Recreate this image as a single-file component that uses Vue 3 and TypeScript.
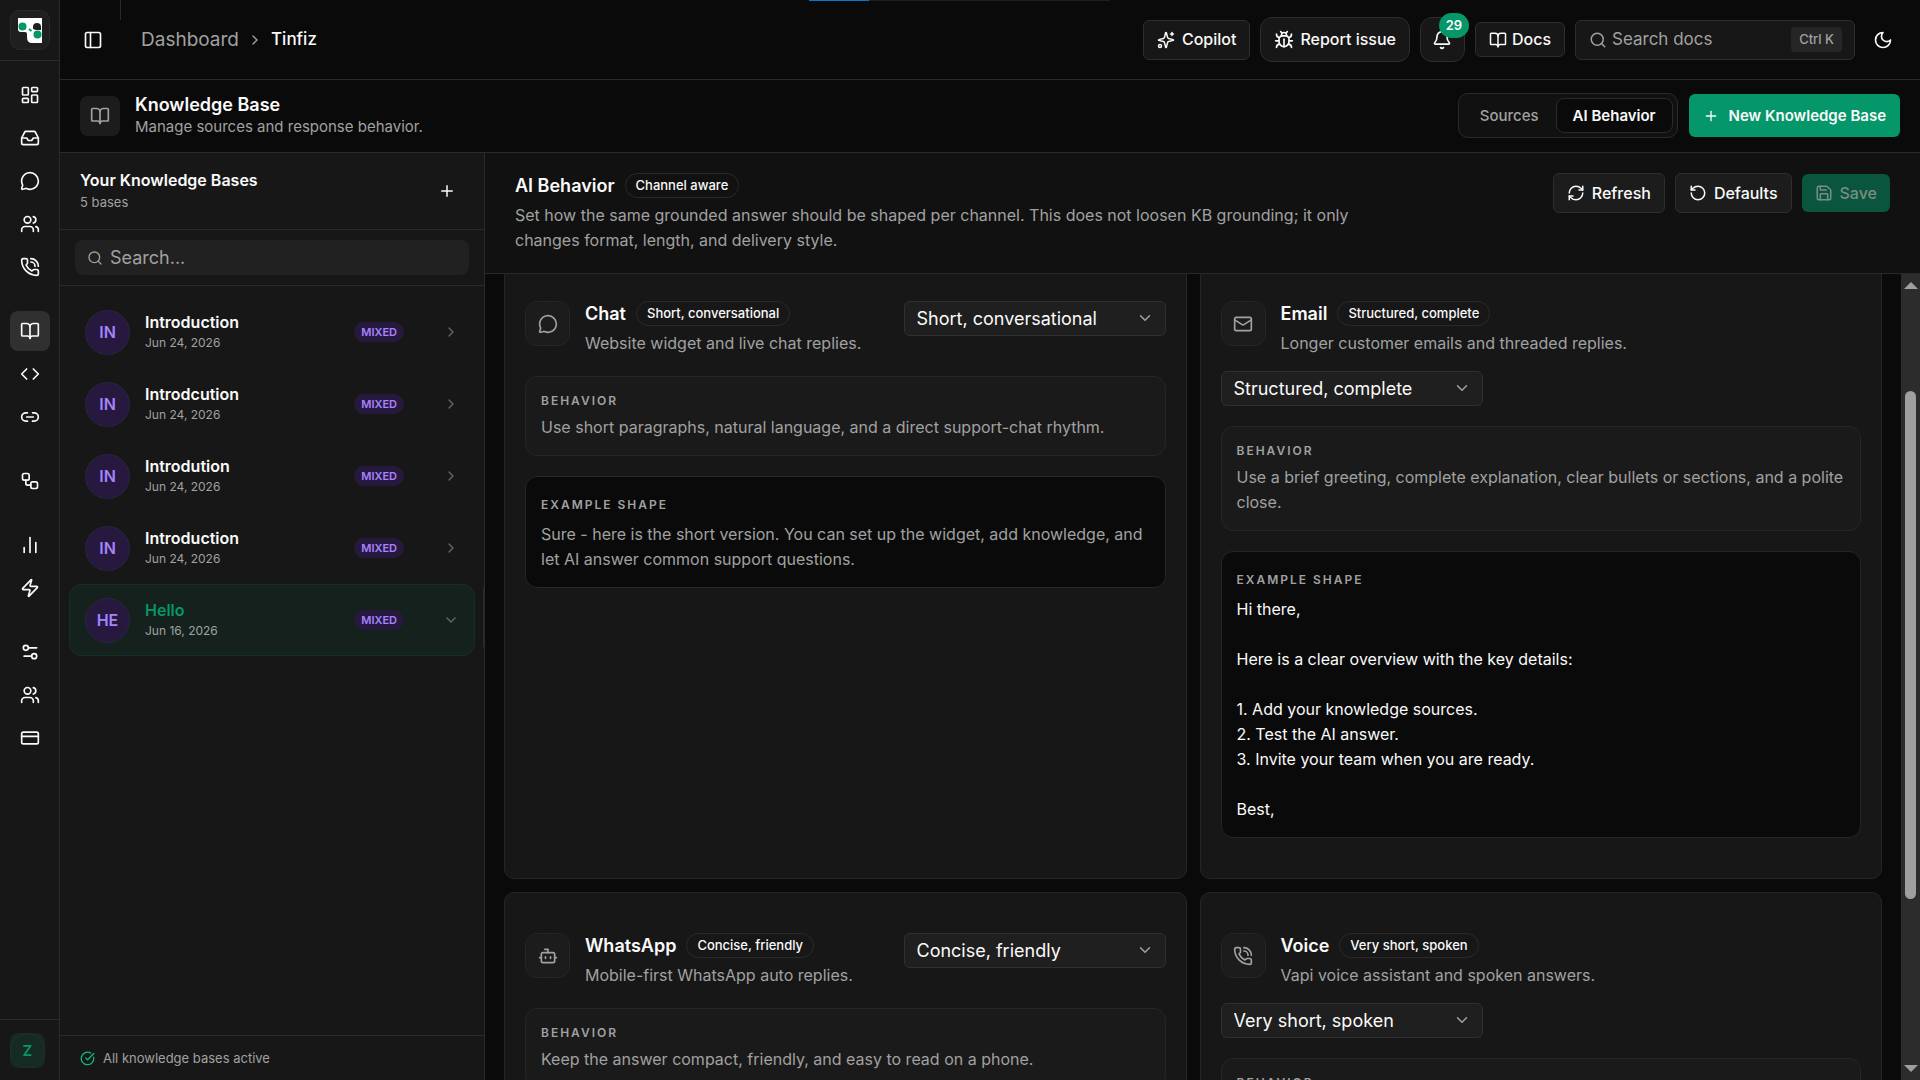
<script setup lang="ts">
import { ref } from 'vue'

type IconName = keyof typeof icons

const icons = {
  panel: '<rect width="18" height="18" x="3" y="3" rx="2"/><path d="M9 3v18"/>',
  dashboard: '<rect width="7" height="9" x="3" y="3" rx="1"/><rect width="7" height="5" x="14" y="3" rx="1"/><rect width="7" height="9" x="14" y="12" rx="1"/><rect width="7" height="5" x="3" y="16" rx="1"/>',
  inbox: '<path d="M22 12h-6l-2 3h-4l-2-3H2"/><path d="M5.45 5.11 2 12v6a2 2 0 0 0 2 2h16a2 2 0 0 0 2-2v-6l-3.45-6.89A2 2 0 0 0 16.76 4H7.24a2 2 0 0 0-1.79 1.11z"/>',
  chat: '<path d="M2.992 16.342a2 2 0 0 1 .094 1.167l-1.065 3.29a1 1 0 0 0 1.236 1.168l3.413-.998a2 2 0 0 1 1.099.092 10 10 0 1 0-4.777-4.719"/>',
  users: '<path d="M16 21v-2a4 4 0 0 0-4-4H6a4 4 0 0 0-4 4v2"/><circle cx="9" cy="7" r="4"/><path d="M22 21v-2a4 4 0 0 0-3-3.87"/><path d="M16 3.13a4 4 0 0 1 0 7.75"/>',
  phone: '<path d="M13 2a9 9 0 0 1 9 9"/><path d="M13 6a5 5 0 0 1 5 5"/><path d="M13.832 16.568a1 1 0 0 0 1.213-.303l.355-.465A2 2 0 0 1 17 15h3a2 2 0 0 1 2 2v3a2 2 0 0 1-2 2A18 18 0 0 1 2 4a2 2 0 0 1 2-2h3a2 2 0 0 1 2 2v3a2 2 0 0 1-.8 1.6l-.468.351a1 1 0 0 0-.292 1.233 14 14 0 0 0 6.392 6.384"/>',
  book: '<path d="M12 7v14"/><path d="M3 18a1 1 0 0 1-1-1V4a1 1 0 0 1 1-1h5a4 4 0 0 1 4 4 4 4 0 0 1 4-4h5a1 1 0 0 1 1 1v13a1 1 0 0 1-1 1h-6a3 3 0 0 0-3 3 3 3 0 0 0-3-3z"/>',
  code: '<path d="m16 18 6-6-6-6"/><path d="m8 6-6 6 6 6"/>',
  link: '<path d="M9 17H7A5 5 0 0 1 7 7h2"/><path d="M15 7h2a5 5 0 1 1 0 10h-2"/><path d="M8 12h8"/>',
  workflow: '<rect width="8" height="8" x="3" y="3" rx="2"/><path d="M7 11v4a2 2 0 0 0 2 2h4"/><rect width="8" height="8" x="13" y="13" rx="2"/>',
  chart: '<path d="M12 21V3"/><path d="M5 21v-6"/><path d="M19 21V9"/>',
  zap: '<path d="M4 14a1 1 0 0 1-.78-1.63l9.9-10.2a.5.5 0 0 1 .86.46l-1.92 6.02A1 1 0 0 0 13 10h7a1 1 0 0 1 .78 1.63l-9.9 10.2a.5.5 0 0 1-.86-.46l1.92-6.02A1 1 0 0 0 11 14z"/>',
  settings: '<path d="M20 7h-9"/><path d="M14 17H5"/><circle cx="17" cy="17" r="3"/><circle cx="7" cy="7" r="3"/>',
  card: '<rect width="20" height="14" x="2" y="5" rx="2"/><path d="M2 10h20"/>',
  chevronRight: '<path d="m9 18 6-6-6-6"/>',
  chevronDown: '<path d="m6 9 6 6 6-6"/>',
  sparkles: '<path d="M9.937 15.5A2 2 0 0 0 8.5 14.063l-6.135-1.582a.5.5 0 0 1 0-.962L8.5 9.936A2 2 0 0 0 9.937 8.5l1.582-6.135a.5.5 0 0 1 .963 0L14.063 8.5A2 2 0 0 0 15.5 9.937l6.135 1.581a.5.5 0 0 1 0 .964L15.5 14.063a2 2 0 0 0-1.437 1.437l-1.582 6.135a.5.5 0 0 1-.963 0z"/><path d="M20 2v4"/><path d="M22 4h-4"/><circle cx="4" cy="20" r="2"/>',
  bug: '<path d="m8 2 1.88 1.88"/><path d="M14.12 3.88 16 2"/><path d="M9 7.13v-1a3.003 3.003 0 1 1 6 0v1"/><path d="M12 20c-3.3 0-6-2.7-6-6v-3a4 4 0 0 1 4-4h4a4 4 0 0 1 4 4v3c0 3.3-2.7 6-6 6"/><path d="M12 20v-9"/><path d="M6.53 9C4.6 8.8 3 7.1 3 5"/><path d="M6 13H2"/><path d="M3 21c0-2.1 1.7-3.9 3.8-4"/><path d="M20.97 5c0 2.1-1.6 3.8-3.5 4"/><path d="M22 13h-4"/><path d="M17.2 17c2.1.1 3.8 1.9 3.8 4"/>',
  bell: '<path d="M10.268 21a2 2 0 0 0 3.464 0"/><path d="M3.262 15.326A1 1 0 0 0 4 17h16a1 1 0 0 0 .74-1.673C19.41 13.956 18 12.499 18 8A6 6 0 0 0 6 8c0 4.499-1.411 5.956-2.738 7.326"/>',
  search: '<path d="m21 21-4.34-4.34"/><circle cx="11" cy="11" r="8"/>',
  moon: '<path d="M12 3a6 6 0 0 0 9 9 9 9 0 1 1-9-9Z"/>',
  plus: '<path d="M5 12h14"/><path d="M12 5v14"/>',
  refresh: '<path d="M3 12a9 9 0 0 1 9-9 9.75 9.75 0 0 1 6.74 2.74L21 8"/><path d="M21 3v5h-5"/><path d="M21 12a9 9 0 0 1-9 9 9.75 9.75 0 0 1-6.74-2.74L3 16"/><path d="M8 16H3v5"/>',
  undo: '<path d="M3 12a9 9 0 1 0 9-9 9.75 9.75 0 0 0-6.74 2.74L3 8"/><path d="M3 3v5h5"/>',
  save: '<path d="M15.2 3a2 2 0 0 1 1.4.6l3.8 3.8a2 2 0 0 1 .6 1.4V19a2 2 0 0 1-2 2H5a2 2 0 0 1-2-2V5a2 2 0 0 1 2-2z"/><path d="M17 21v-7a1 1 0 0 0-1-1H8a1 1 0 0 0-1 1v7"/><path d="M7 3v4a1 1 0 0 0 1 1h7"/>',
  mail: '<rect width="20" height="16" x="2" y="4" rx="2"/><path d="m22 7-8.97 5.7a1.94 1.94 0 0 1-2.06 0L2 7"/>',
  bot: '<path d="M12 8V4H8"/><rect width="16" height="12" x="4" y="8" rx="2"/><path d="M2 14h2"/><path d="M20 14h2"/><path d="M15 13v2"/><path d="M9 13v2"/>',
  check: '<path d="M21.801 10A10 10 0 1 1 17 3.335"/><path d="m9 11 3 3L22 4"/>',
}

const navGroups: { icon: IconName; label: string; active?: boolean }[][] = [
  [
    { icon: 'dashboard', label: 'Overview' },
    { icon: 'inbox', label: 'Inbox' },
    { icon: 'chat', label: 'Conversations' },
    { icon: 'users', label: 'Contacts' },
    { icon: 'phone', label: 'Calls' },
  ],
  [
    { icon: 'book', label: 'Knowledge Base', active: true },
    { icon: 'code', label: 'Embed' },
    { icon: 'link', label: 'Integrations' },
  ],
  [{ icon: 'workflow', label: 'Workflows' }],
  [
    { icon: 'chart', label: 'Analytics' },
    { icon: 'zap', label: 'Automation' },
  ],
  [
    { icon: 'settings', label: 'Settings' },
    { icon: 'users', label: 'Team' },
    { icon: 'card', label: 'Billing' },
  ],
]

const bases = [
  { initials: 'IN', name: 'Introduction', date: 'Jun 24, 2026' },
  { initials: 'IN', name: 'Introdcution', date: 'Jun 24, 2026' },
  { initials: 'IN', name: 'Introdution', date: 'Jun 24, 2026' },
  { initials: 'IN', name: 'Introduction', date: 'Jun 24, 2026' },
  { initials: 'HE', name: 'Hello', date: 'Jun 16, 2026' },
]
const selected = ref(4)

const styles = ['Short, conversational', 'Structured, complete', 'Concise, friendly', 'Very short, spoken']

interface Channel {
  id: string
  icon: IconName
  name: string
  style: string
  summary: string
  stacked?: boolean
  behavior: string
  example: string
  strong?: boolean
}

const channels = ref<Channel[]>([
  {
    id: 'chat',
    icon: 'chat',
    name: 'Chat',
    style: styles[0],
    summary: 'Website widget and live chat replies.',
    behavior: 'Use short paragraphs, natural language, and a direct support-chat rhythm.',
    example: 'Sure - here is the short version. You can set up the widget, add knowledge, and let AI answer common support questions.',
  },
  {
    id: 'email',
    icon: 'mail',
    name: 'Email',
    style: styles[1],
    summary: 'Longer customer emails and threaded replies.',
    stacked: true,
    behavior: 'Use a brief greeting, complete explanation, clear bullets or sections, and a polite close.',
    example: 'Hi there,\n\nHere is a clear overview with the key details:\n\n1. Add your knowledge sources.\n2. Test the AI answer.\n3. Invite your team when you are ready.\n\nBest,',
    strong: true,
  },
  {
    id: 'whatsapp',
    icon: 'bot',
    name: 'WhatsApp',
    style: styles[2],
    summary: 'Mobile-first WhatsApp auto replies.',
    behavior: 'Keep the answer compact, friendly, and easy to read on a phone.',
    example: '',
  },
  {
    id: 'voice',
    icon: 'phone',
    name: 'Voice',
    style: styles[3],
    summary: 'Vapi voice assistant and spoken answers.',
    stacked: true,
    behavior: '',
    example: '',
  },
])
</script>

<template>
  <div class="app">
    <nav class="rail" aria-label="Main">
      <div class="rail-top">
        <a href="#" class="logo" aria-label="Home">
          <svg width="24" height="25" viewBox="0 0 24 25">
            <path d="M0 0h24v25H14q-5 0-5-6v-3q0-2-2-2H3q-3 0-3-3z" fill="#fff" />
            <path d="M15 11V9q0-4 4-4t4 4v3h-5z" fill="#1f1f1f" />
            <circle cx="4.500" cy="8.500" r="4" fill="#059669" />
            <circle cx="19.500" cy="16.500" r="4" fill="#059669" />
            <path d="m11 11 2.500 2" stroke="#059669" stroke-width="2" />
          </svg>
        </a>
      </div>
      <div class="rail-groups">
        <div v-for="(group, g) in navGroups" :key="g" class="rail-group">
          <a v-for="item in group" :key="item.label" href="#" class="rail-link" :class="{ active: item.active }" :aria-label="item.label">
            <svg class="icon i20" viewBox="0 0 24 24" v-html="icons[item.icon]" />
          </a>
        </div>
      </div>
      <div class="rail-bottom"><button class="avatar-z" type="button"><span>Z</span></button></div>
    </nav>

    <div class="page">
      <header class="topbar">
        <div class="progress"></div>
        <button class="plain toggle" type="button" aria-label="Toggle sidebar">
          <svg class="icon i20" viewBox="0 0 24 24" v-html="icons.panel" />
        </button>
        <nav class="crumbs" aria-label="Breadcrumb">
          <a href="#">Dashboard</a>
          <svg class="icon i16" viewBox="0 0 24 24" v-html="icons.chevronRight" />
          <span class="here">Tinfiz</span>
        </nav>
        <div class="tools">
          <button class="btn copilot" type="button"><svg class="icon i18" viewBox="0 0 24 24" v-html="icons.sparkles" />Copilot</button>
          <button class="btn report" type="button"><svg class="icon i20" viewBox="0 0 24 24" v-html="icons.bug" />Report issue</button>
          <button class="btn bell" type="button" aria-label="Notifications">
            <svg class="icon i20" viewBox="0 0 24 24" v-html="icons.bell" /><span class="count">29</span>
          </button>
          <a href="#" class="btn docs"><svg class="icon i18" viewBox="0 0 24 24" v-html="icons.book" />Docs</a>
          <label class="doc-search">
            <svg class="icon i18" viewBox="0 0 24 24" v-html="icons.search" />
            <input type="search" placeholder="Search docs" aria-label="Search docs" />
            <kbd>Ctrl K</kbd>
          </label>
          <button class="plain theme" type="button" aria-label="Toggle theme"><svg class="icon i20" viewBox="0 0 24 24" v-html="icons.moon" /></button>
        </div>
      </header>

      <section class="page-head">
        <div class="page-icon"><svg class="icon i20" viewBox="0 0 24 24" v-html="icons.book" /></div>
        <div class="page-title">
          <h1>Knowledge Base</h1>
          <p>Manage sources and response behavior.</p>
        </div>
        <div class="tabs" role="tablist">
          <button class="tab" type="button" role="tab" aria-selected="false">Sources</button>
          <button class="tab on" type="button" role="tab" aria-selected="true">AI Behavior</button>
        </div>
        <button class="btn primary create" type="button"><svg class="icon i16" viewBox="0 0 24 24" v-html="icons.plus" />New Knowledge Base</button>
      </section>

      <div class="body">
        <aside class="bases">
          <div class="bases-head">
            <div>
              <h2>Your Knowledge Bases</h2>
              <p>5 bases</p>
            </div>
            <button class="plain add" type="button" aria-label="Add knowledge base"><svg class="icon i18" viewBox="0 0 24 24" v-html="icons.plus" /></button>
          </div>
          <div class="bases-search">
            <label>
              <svg class="icon i16" viewBox="0 0 24 24" v-html="icons.search" />
              <input type="search" placeholder="Search..." aria-label="Search knowledge bases" />
            </label>
          </div>
          <div class="base-list">
            <button v-for="(base, i) in bases" :key="i" type="button" class="base" :class="{ selected: i === selected }" @click="selected = i">
              <span class="initials">{{ base.initials }}</span>
              <span class="base-text">
                <span class="base-name">{{ base.name }}</span>
                <span class="base-date">{{ base.date }}</span>
              </span>
              <span class="kind">MIXED</span>
              <svg class="icon i16" viewBox="0 0 24 24" v-html="i === selected ? icons.chevronDown : icons.chevronRight" />
            </button>
          </div>
          <footer class="bases-foot"><svg class="icon i14" viewBox="0 0 24 24" v-html="icons.check" />All knowledge bases active</footer>
          <span class="grip" aria-hidden="true"></span>
        </aside>

        <main class="main">
          <header class="main-head">
            <div class="main-intro">
              <div class="title-row">
                <h2>AI Behavior</h2>
                <span class="pill">Channel aware</span>
              </div>
              <p>Set how the same grounded answer should be shaped per channel. This does not loosen KB grounding; it only changes format, length, and delivery style.</p>
            </div>
            <div class="actions">
              <button class="btn action" type="button"><svg class="icon i18" viewBox="0 0 24 24" v-html="icons.refresh" />Refresh</button>
              <button class="btn action" type="button"><svg class="icon i18" viewBox="0 0 24 24" v-html="icons.undo" />Defaults</button>
              <button class="btn primary save" type="button" disabled><svg class="icon i18" viewBox="0 0 24 24" v-html="icons.save" />Save</button>
            </div>
          </header>

          <div class="scroller">
            <div class="viewport">
              <div class="cards">
                <article v-for="channel in channels" :key="channel.id" class="card">
                  <div class="card-head" :class="{ stacked: channel.stacked }">
                    <div class="channel">
                      <div class="channel-icon"><svg class="icon i20" viewBox="0 0 24 24" v-html="icons[channel.icon]" /></div>
                      <div class="channel-text">
                        <div class="title-row">
                          <h3>{{ channel.name }}</h3>
                          <span class="pill">{{ channel.style }}</span>
                        </div>
                        <p>{{ channel.summary }}</p>
                      </div>
                    </div>
                    <div class="select">
                      <select v-model="channel.style" :aria-label="channel.name + ' style'">
                        <option v-for="style in styles" :key="style">{{ style }}</option>
                      </select>
                      <svg class="icon i18" viewBox="0 0 24 24" v-html="icons.chevronDown" />
                    </div>
                  </div>
                  <section class="box">
                    <h4>BEHAVIOR</h4>
                    <p>{{ channel.behavior }}</p>
                  </section>
                  <section v-if="channel.example" class="box example" :class="{ strong: channel.strong }">
                    <h4>EXAMPLE SHAPE</h4>
                    <p>{{ channel.example }}</p>
                  </section>
                </article>
              </div>
            </div>
            <div class="scrollbar" aria-hidden="true">
              <span class="arrow up"></span>
              <span class="track"><span class="thumb"></span></span>
              <span class="arrow down"></span>
            </div>
          </div>
        </main>
      </div>
    </div>
  </div>
</template>

<style>
body {
  margin: 0;
  background: #0a0a0a;
}
</style>

<style scoped>
.app {
  display: flex;
  height: 100vh;
  overflow: hidden;
  color: #fafafa;
  background: #0a0a0a;
  font-family: Inter, sans-serif;
  font-size: 16px;
  line-height: 25px;
}
.app * {
  box-sizing: border-box;
}
h1, h2, h3, h4, p {
  margin: 0;
}
p {
  color: #a1a1a1;
}
button, input, select {
  margin: 0;
  color: inherit;
  font: inherit;
}
input {
  flex: 1;
  min-width: 0;
  padding: 0;
  border: 0;
  outline: 0;
  background: none;
  font-size: 18px;
}
input::placeholder {
  color: #a1a1a1;
  opacity: 1;
}
a {
  color: inherit;
  text-decoration: none;
}
.icon {
  flex: none;
  fill: none;
  stroke: currentColor;
  stroke-width: 2;
  stroke-linecap: round;
  stroke-linejoin: round;
}
.i14 { width: 15px; height: 15px; }
.i16 { width: 16px; height: 16px; }
.i18 { width: 18px; height: 18px; }
.i20 { width: 20px; height: 20px; }

.rail {
  display: flex;
  flex: none;
  flex-direction: column;
  width: 60px;
  border-right: 1px solid #2a2a2a;
  background: #171717;
}
.rail-top {
  padding: 10px 9px 10px 10px;
  border-bottom: 1px solid #2a2a2a;
}
.logo {
  display: flex;
  align-items: center;
  justify-content: center;
  width: 40px;
  height: 40px;
  border: 1px solid #2a2a2a;
  border-radius: 10px;
  background: #1f1f1f;
}
.rail-groups {
  display: flex;
  flex: 1;
  flex-direction: column;
  gap: 24px;
  padding: 14px 10px;
}
.rail-group {
  display: flex;
  flex-direction: column;
  gap: 3px;
}
.rail-link {
  display: flex;
  align-items: center;
  justify-content: center;
  width: 40px;
  height: 40px;
  border-radius: 8px;
}
.rail-link.active {
  background: #303030;
}
.rail-bottom {
  padding: 13px 10px 12px;
  border-top: 1px solid #2a2a2a;
}
.avatar-z {
  display: block;
  width: 35px;
  height: 35px;
  padding: 0;
  border: 0;
  border-radius: 8px;
  background: #152a22;
  color: #059669;
  font-size: 15px;
  font-weight: 600;
}
.avatar-z span {
  display: block;
  height: 35px;
  border: 1px solid #262f2b;
  border-radius: 50%;
  line-height: 33px;
}

.page {
  display: flex;
  flex: 1;
  flex-direction: column;
  min-width: 0;
}
.topbar {
  position: relative;
  display: flex;
  flex: none;
  align-items: center;
  height: 80px;
  padding: 0 15px;
  border-bottom: 1px solid #2a2a2a;
}
.topbar::before {
  position: absolute;
  top: 0;
  left: 60px;
  width: 1px;
  height: 20px;
  background: #2a2a2a;
  content: '';
}
.progress {
  position: absolute;
  top: 0;
  left: 749px;
  width: 301px;
  height: 1px;
  background: linear-gradient(to right, #0078d4 20%, #1f1f1f 20%);
}
.plain {
  display: flex;
  align-items: center;
  justify-content: center;
  width: 36px;
  height: 36px;
  padding: 0;
  border: 0;
  background: none;
}
.crumbs {
  display: flex;
  align-items: center;
  gap: 8px;
  margin-left: 30px;
  color: #a1a1a1;
  font-size: 19px;
}
.here {
  color: #fafafa;
  font-size: 17px;
  font-weight: 500;
}
.tools {
  display: flex;
  align-items: center;
  gap: 10px;
  margin-left: auto;
}
.btn {
  display: inline-flex;
  align-items: center;
  justify-content: center;
  gap: 7px;
  height: 40px;
  padding: 0 13px;
  border: 1px solid #2e2e2e;
  border-radius: 6px;
  background: #171717;
  font-weight: 500;
  white-space: nowrap;
}
.report, .bell {
  height: 45px;
  border-radius: 12px;
}
.report {
  gap: 6px;
}
.bell {
  position: relative;
  width: 45px;
  padding: 0;
}
.count {
  position: absolute;
  top: -5px;
  right: -5px;
  width: 30px;
  height: 25px;
  border-radius: 13px;
  background: #059669;
  font-size: 13px;
  font-weight: 600;
}
.docs {
  gap: 5px;
  height: 35px;
}
.doc-search {
  display: flex;
  align-items: center;
  gap: 5px;
  width: 280px;
  height: 40px;
  padding: 0 12px 0 13px;
  border: 1px solid #2e2e2e;
  border-radius: 6px;
  background: #171717;
  color: #a1a1a1;
}
.doc-search input {
  font-size: 17px;
}
kbd {
  padding: 0 8px;
  border-radius: 4px;
  background: #262626;
  font-family: inherit;
  font-size: 13px;
  font-weight: 500;
}
.theme {
  margin-right: 4px;
}

.page-head {
  display: flex;
  flex: none;
  align-items: center;
  height: 73px;
  padding: 0 20px 1px;
  border-bottom: 1px solid #2a2a2a;
}
.page-icon {
  display: flex;
  align-items: center;
  justify-content: center;
  width: 40px;
  height: 40px;
  border-radius: 8px;
  background: #1c1c1c;
  color: #a1a1a1;
}
.page-title {
  flex: 1;
  margin-left: 15px;
  font-size: 15px;
  line-height: 22px;
}
h1 {
  font-size: 18px;
  font-weight: 600;
  line-height: 22px;
}
.tabs {
  display: flex;
  height: 45px;
  margin-right: 11px;
  padding: 4px;
  border: 1px solid #2a2a2a;
  border-radius: 10px;
  background: #111;
}
.tab {
  padding: 0 16px;
  border: 1px solid transparent;
  border-radius: 8px;
  background: none;
  color: #a1a1a1;
  font-size: 15px;
  font-weight: 500;
}
.tab.on {
  border-color: #2a2a2a;
  background: #0a0a0a;
  color: #fafafa;
  font-weight: 600;
}
.primary {
  border: 0;
  background: #059669;
}
.create {
  gap: 10px;
  height: 43px;
  padding: 0 14px;
  font-size: 15px;
  font-weight: 600;
}

.body {
  display: flex;
  flex: 1;
  min-height: 0;
}
.bases {
  position: relative;
  display: flex;
  flex: none;
  flex-direction: column;
  width: 425px;
  border-right: 1px solid #2a2a2a;
  background: #171717;
}
.grip {
  position: absolute;
  top: 50%;
  right: 0;
  width: 1px;
  height: 60px;
  margin-top: -30px;
  background: #2a2a2a;
}
.bases-head {
  display: flex;
  align-items: center;
  justify-content: space-between;
  height: 77px;
  padding: 0 19px 0 20px;
  border-bottom: 1px solid #2a2a2a;
}
.bases-head h2 {
  font-size: 16px;
  font-weight: 600;
  line-height: 22px;
}
.bases-head p {
  font-size: 13px;
  line-height: 22px;
}
.bases-search {
  padding: 10px 15px;
  border-bottom: 1px solid #2a2a2a;
}
.bases-search label {
  display: flex;
  align-items: center;
  gap: 7px;
  height: 35px;
  padding: 0 12px;
  border-radius: 8px;
  background: #212121;
  color: #a1a1a1;
}
.base-list {
  flex: 1;
  padding: 10px 9px;
}
.base {
  display: flex;
  align-items: center;
  width: 100%;
  height: 72px;
  padding: 0 15px;
  border: 1px solid transparent;
  border-radius: 12px;
  background: none;
  text-align: left;
}
.base.selected {
  border-color: #12302a;
  background: #15211d;
}
.base .icon {
  color: #666;
}
.initials {
  width: 45px;
  height: 45px;
  border: 1px solid #2c2540;
  border-radius: 50%;
  background: #26183e;
  color: #a684ff;
  font-weight: 600;
  line-height: 42px;
  text-align: center;
}
.base-text {
  display: flex;
  flex: 1;
  flex-direction: column;
  margin-left: 15px;
}
.base-name {
  font-weight: 600;
  line-height: 22px;
}
.selected .base-name {
  color: #059669;
}
.base-date {
  color: #a1a1a1;
  font-size: 12px;
  line-height: 20px;
}
.kind {
  margin-right: 39px;
  padding: 0 7px;
  border-radius: 10px;
  background: #26183e;
  color: #a684ff;
  font-size: 11px;
  font-weight: 600;
  line-height: 20px;
}
.bases-foot {
  display: flex;
  align-items: center;
  gap: 8px;
  height: 45px;
  padding: 0 20px;
  border-top: 1px solid #2a2a2a;
  color: #a1a1a1;
  font-size: 13px;
}
.bases-foot .icon {
  color: #10b981;
}

.main {
  display: flex;
  flex: 1;
  flex-direction: column;
  min-width: 0;
}
.main-head {
  display: flex;
  align-items: flex-start;
  justify-content: space-between;
  padding: 20px 30px;
  border-bottom: 1px solid #2a2a2a;
  background: #111;
}
.main-intro {
  width: 840px;
}
.title-row {
  display: flex;
  align-items: center;
  gap: 10px;
  height: 25px;
  margin-bottom: 5px;
}
.title-row h2, .title-row h3 {
  font-size: 18px;
  font-weight: 600;
}
.pill {
  padding: 0 10px;
  border: 1px solid #2a2a2a;
  border-radius: 13px;
  font-size: 13px;
  font-weight: 500;
  line-height: 23px;
  white-space: nowrap;
}
.actions {
  display: flex;
  align-items: center;
  gap: 10px;
}
.action {
  background: #1c1c1c;
}
.save {
  height: 38px;
  background: #0a553d;
  color: #7c8d86;
}
.scroller {
  display: flex;
  flex: 1;
  min-height: 0;
}
.viewport {
  flex: 1;
  min-width: 0;
  overflow: hidden;
}
.cards {
  display: grid;
  grid-template-columns: 1fr 1fr;
  gap: 13px;
  margin-top: -14px;
  padding: 0 19px;
}
.card {
  display: flex;
  flex-direction: column;
  gap: 20px;
  padding: 40px 20px;
  border: 1px solid #262626;
  border-radius: 10px;
  background: #171717;
}
.card-head {
  display: flex;
  align-items: flex-start;
  justify-content: space-between;
  gap: 15px;
}
.card-head.stacked {
  flex-direction: column;
}
.channel {
  display: flex;
  gap: 15px;
}
.channel-icon {
  display: flex;
  flex: none;
  align-items: center;
  justify-content: center;
  width: 45px;
  height: 45px;
  border: 1px solid #262626;
  border-radius: 12px;
  background: #1c1c1c;
  color: #a1a1a1;
}
.select {
  position: relative;
  flex: none;
  width: 262px;
}
.select select {
  display: block;
  width: 100%;
  height: 35px;
  padding: 0 36px 0 12px;
  border: 1px solid #303030;
  border-radius: 6px;
  appearance: none;
  background: #1f1f1f;
  font-size: 18px;
}
.select .icon {
  position: absolute;
  top: 8px;
  right: 12px;
  color: #a1a1a1;
  pointer-events: none;
}
.box {
  padding: 15px;
  border: 1px solid #262626;
  border-radius: 12px;
  background: #1a1a1a;
}
.box h4 {
  margin-bottom: 5px;
  color: #a1a1a1;
  font-size: 12px;
  font-weight: 600;
  letter-spacing: 2px;
  line-height: 18px;
}
.example {
  padding: 19px 15px 15px;
  background: #0a0a0a;
}
.example h4 {
  margin-bottom: 8px;
}
.example p {
  white-space: pre-line;
}
.strong p {
  color: #fafafa;
}
.scrollbar {
  display: flex;
  flex: none;
  flex-direction: column;
  align-items: center;
  width: 19px;
  padding: 8px 0;
  background: #2c2c2c;
}
.arrow {
  width: 0;
  border: 7px solid transparent;
}
.up {
  border-top: 0;
  border-bottom-color: #9f9f9f;
}
.down {
  border-bottom: 0;
  border-top-color: #9f9f9f;
}
.track {
  display: flex;
  flex: 1;
  flex-direction: column;
  padding: 102px 0 166px;
}
.thumb {
  flex: 1;
  width: 11px;
  border-radius: 6px;
  background: #9f9f9f;
}
</style>
